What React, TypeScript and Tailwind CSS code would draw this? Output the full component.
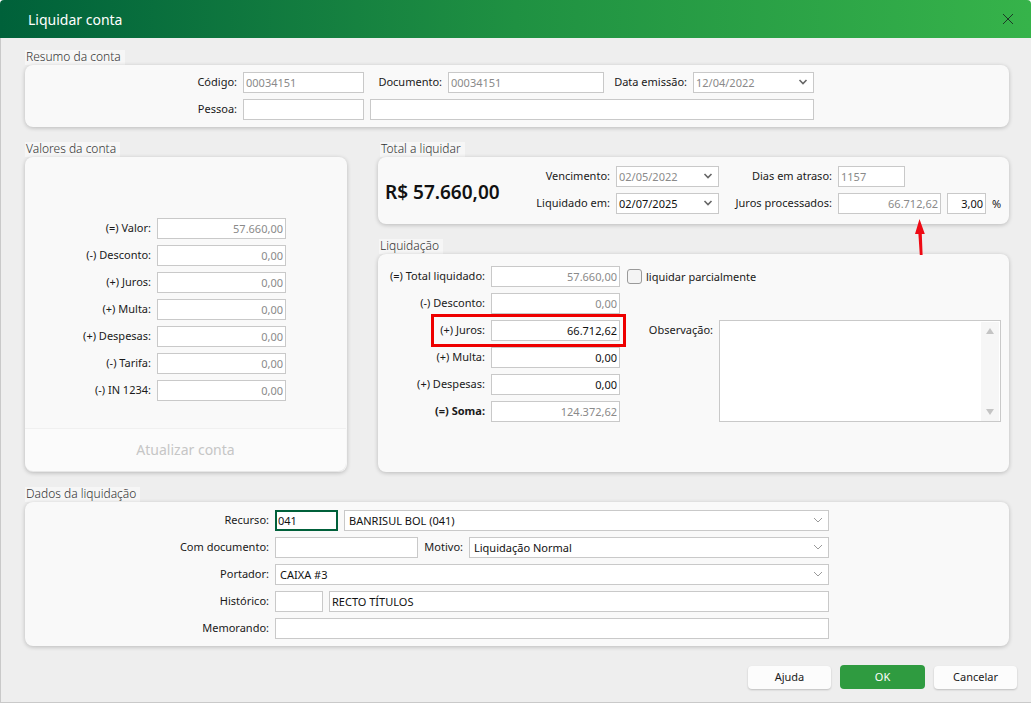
import type { ReactNode } from 'react';

const fieldBase = 'h-[21px] shrink-0 border border-[#c9c9c9] bg-white flex items-center pb-[1px] text-[11px] leading-none whitespace-nowrap';

function Chevron({ light }: { light?: boolean }) {
  return light ? (
    <svg width="10" height="6" viewBox="0 0 10 6" className="shrink-0">
      <path d="M1 1l4 4 4-4" fill="none" stroke="#9a9a9a" strokeWidth="1" />
    </svg>
  ) : (
    <svg width="10" height="6" viewBox="0 0 10 6" className="shrink-0">
      <path d="M1.5 1l3.5 3.5L8.5 1" fill="none" stroke="#666666" strokeWidth="1.6" />
    </svg>
  );
}

function Field({
  w,
  value,
  muted,
  right,
}: {
  w: string;
  value?: string;
  muted?: boolean;
  right?: boolean;
}) {
  return (
    <div
      className={`${fieldBase} ${w} px-[2px] ${right ? 'justify-end' : ''} ${
        muted ? 'text-[#8a8a8a]' : 'text-[#111111]'
      }`}
    >
      {value}
    </div>
  );
}

function Select({
  w,
  value,
  muted,
  large,
}: {
  w: string;
  value?: string;
  muted?: boolean;
  large?: boolean;
}) {
  return (
    <div
      className={`${fieldBase} ${w} justify-between ${large ? 'pl-[4px] pr-[5px]' : 'pl-[2px] pr-[5px]'} ${
        muted ? 'text-[#8a8a8a]' : 'text-[#111111]'
      }`}
    >
      <span>{value}</span>
      <Chevron light={large} />
    </div>
  );
}

function Label({ w, children, bold }: { w: string; children: ReactNode; bold?: boolean }) {
  return (
    <span className={`${w} shrink-0 whitespace-nowrap pb-[2px] text-right text-[11px] leading-none text-[#1a1a1a] ${bold ? 'font-bold' : ''}`}>
      {children}
    </span>
  );
}

function Section({
  title,
  titleClass = '',
  className = '',
  cardClass = '',
  children,
}: {
  title: string;
  titleClass?: string;
  className?: string;
  cardClass?: string;
  children: ReactNode;
}) {
  return (
    <section className={className}>
      <div className={`h-[15px] w-fit bg-[#f6f6f6] pl-[1px] pr-[4px] text-[12px] font-light leading-[14px] text-[#333333] ${titleClass}`}>
        {title}
      </div>
      <div className={`relative rounded-[8px] bg-[#f9f9f9] shadow-[0_1px_4px_rgba(0,0,0,0.22)] ${cardClass}`}>{children}</div>
    </section>
  );
}

function Row({ children }: { children: ReactNode }) {
  return <div className="flex items-center gap-[6px]">{children}</div>;
}

const contaValues: [string, string][] = [
  ['(=) Valor:', '57.660,00'],
  ['(-) Desconto:', '0,00'],
  ['(+) Juros:', '0,00'],
  ['(+) Multa:', '0,00'],
  ['(+) Despesas:', '0,00'],
  ['(-) Tarifa:', '0,00'],
  ['(-) IN 1234:', '0,00'],
];

export default function App() {
  return (
    <div className="flex h-[703px] w-[1031px] flex-col overflow-hidden bg-white font-['Noto_Sans',sans-serif]">
      <header className="flex h-[38px] shrink-0 items-center justify-between rounded-t-[4px] bg-gradient-to-r from-[#00613a] via-[#1f9142] to-[#36b34a] pl-[28px] pr-[18px]">
        <h1 className="pt-[1px] text-[14px] font-normal leading-none text-white">Liquidar conta</h1>
        <svg width="10" height="10" viewBox="0 0 10 10">
          <path d="M0 0l10 10M10 0L0 10" stroke="#1c3a26" strokeWidth="1" />
        </svg>
      </header>

      <main className="flex flex-1 flex-col border-b border-l border-[#c9c9c9] bg-[#eeeeee] pl-[24px] pr-[22px] pt-[12px]">
        <Section title="Resumo da conta" cardClass="h-[62px] flex flex-col gap-[6px] pt-[7px] pl-[165px]">
          <Row>
            <Label w="w-[47px]">Código:</Label>
            <Field w="w-[121px]" value="00034151" muted />
            <Label w="w-[72px]">Documento:</Label>
            <Field w="w-[156px]" value="00034151" muted />
            <Label w="w-[77px]">Data emissão:</Label>
            <Select w="w-[121px]" value="12/04/2022" muted />
          </Row>
          <Row>
            <Label w="w-[47px]">Pessoa:</Label>
            <Field w="w-[121px]" />
            <Field w="w-[444px]" />
          </Row>
        </Section>

        <div className="mt-[15px] flex gap-[31px]">
          <Section title="Valores da conta" className="w-[322px]" cardClass="h-[315px] flex flex-col">
            <div className="flex flex-1 flex-col gap-[6px] pl-[6px] pt-[61px]">
              {contaValues.map(([label, value]) => (
                <Row key={label}>
                  <Label w="w-[120px]">{label}</Label>
                  <Field w="w-[129px]" value={value} muted right />
                </Row>
              ))}
            </div>
            <button className="mb-[1px] mr-[1px] flex h-[43px] items-center justify-center rounded-b-[8px] border-t border-[#f0f0f0] bg-[#fbfbfb] pb-[2px] text-[14px] text-[#c6c6c6] shadow-[0_1px_1px_rgba(0,0,0,0.08)]">
              Atualizar conta
            </button>
          </Section>

          <div className="relative w-[631px]">
            <Section title="Total a liquidar" titleClass="ml-[2px]" cardClass="h-[67px] flex pt-[9px]">
              <div className="mt-[17px] w-[136px] shrink-0 pl-[7px] text-[19px] font-semibold leading-none text-[#111111]">
                R$ 57.660,00
              </div>
              <div className="flex flex-col gap-[6px]">
                <Row>
                  <Label w="w-[96px]">Vencimento:</Label>
                  <Select w="w-[103px]" value="02/05/2022" muted />
                  <Label w="w-[107px]">Dias em atraso:</Label>
                  <Field w="w-[67px]" value="1157" muted />
                </Row>
                <Row>
                  <Label w="w-[96px]">Liquidado em:</Label>
                  <Select w="w-[103px]" value="02/07/2025" />
                  <Label w="w-[107px]">Juros processados:</Label>
                  <Field w="w-[103px]" value="66.712,62" muted right />
                  <Field w="w-[39px]" value="3,00" right />
                  <span className="pb-[1px] text-[11px] leading-none text-[#1a1a1a]">%</span>
                </Row>
              </div>
            </Section>

            <Section title="Liquidação" className="mt-[15px]" titleClass="ml-[1px]" cardClass="h-[218px] flex pl-[7px] pt-[12px]">
              <div className="flex flex-col gap-[6px]">
                <Row>
                  <Label w="w-[100px]">(=) Total liquidado:</Label>
                  <Field w="w-[129px]" value="57.660,00" muted right />
                </Row>
                <Row>
                  <Label w="w-[100px]">(-) Desconto:</Label>
                  <Field w="w-[129px]" value="0,00" muted right />
                </Row>
                <Row>
                  <Label w="w-[100px]">(+) Juros:</Label>
                  <Field w="w-[129px]" value="66.712,62" right />
                </Row>
                <Row>
                  <Label w="w-[100px]">(+) Multa:</Label>
                  <Field w="w-[129px]" value="0,00" right />
                </Row>
                <Row>
                  <Label w="w-[100px]">(+) Despesas:</Label>
                  <Field w="w-[129px]" value="0,00" right />
                </Row>
                <Row>
                  <Label w="w-[100px]" bold>(=) Soma:</Label>
                  <Field w="w-[129px]" value="124.372,62" muted right />
                </Row>
              </div>
              <div className="ml-[7px] flex flex-col">
                <div className="flex h-[21px] items-center gap-[4px]">
                  <span className="h-[15px] w-[15px] rounded-[3px] border border-[#9a9a9a] bg-[#f4f4f4]" />
                  <span className="text-[11px] leading-none text-[#1a1a1a]">liquidar parcialmente</span>
                </div>
                <div className="ml-[15px] mt-[33px] flex gap-[6px]">
                  <span className="w-[71px] pt-[4px] text-right text-[11px] leading-none text-[#1a1a1a]">Observação:</span>
                  <div className="flex h-[102px] w-[282px] justify-end border border-[#c9c9c9] bg-white pr-[1px] pt-[1px]">
                    <div className="flex h-[99px] w-[18px] flex-col items-center justify-between bg-[#f6f6f6] py-[6px]">
                      <svg width="8" height="6" viewBox="0 0 8 6">
                        <path d="M4 0l4 6H0z" fill="#c4c4c4" />
                      </svg>
                      <svg width="8" height="6" viewBox="0 0 8 6">
                        <path d="M0 0h8L4 6z" fill="#c4c4c4" />
                      </svg>
                    </div>
                  </div>
                </div>
              </div>
              <div className="absolute left-[53px] top-[60px] h-[33px] w-[195px] border-[3px] border-[#ee0000]" />
            </Section>

            <svg width="12" height="36" viewBox="0 0 12 36" className="absolute left-[537px] top-[77px]">
              <path d="M4.5 0L0 15H3.4L4.8 36H7.6L6.8 15H9.8z" fill="#ee0a14" />
            </svg>
          </div>
        </div>

        <Section title="Dados da liquidação" className="mt-[15px]" cardClass="h-[144px] flex flex-col gap-[6px] pt-[8px] pl-[6px]">
          <Row>
            <Label w="w-[238px]">Recurso:</Label>
            <div className="flex h-[21px] w-[63px] shrink-0 items-center border-2 border-[#00603a] bg-white pb-[1px] pl-[1px] text-[11px] leading-none text-[#111111]">
              041
            </div>
            <Select w="w-[485px]" value="BANRISUL BOL (041)" large />
          </Row>
          <Row>
            <Label w="w-[238px]">Com documento:</Label>
            <Field w="w-[143px]" />
            <Label w="w-[39px]">Motivo:</Label>
            <Select w="w-[360px]" value="Liquidação Normal" large />
          </Row>
          <Row>
            <Label w="w-[238px]">Portador:</Label>
            <Select w="w-[554px]" value="CAIXA #3" large />
          </Row>
          <Row>
            <Label w="w-[238px]">Histórico:</Label>
            <Field w="w-[48px]" />
            <Field w="w-[500px]" value="RECTO TÍTULOS" />
          </Row>
          <Row>
            <Label w="w-[238px]">Memorando:</Label>
            <Field w="w-[554px]" />
          </Row>
        </Section>

        <footer className="-mr-[8px] mt-[19px] flex items-center justify-end">
          <button className="h-[23px] w-[83px] rounded-[4px] bg-[#fcfcfc] text-[11px] text-[#1a1a1a] shadow-[0_1px_2px_rgba(0,0,0,0.2)]">
            Ajuda
          </button>
          <button className="ml-[9px] h-[24px] w-[85px] rounded-[4px] bg-[#2f9b40] text-[11px] text-white">OK</button>
          <button className="ml-[9px] h-[23px] w-[83px] rounded-[4px] bg-[#fcfcfc] text-[11px] text-[#1a1a1a] shadow-[0_1px_2px_rgba(0,0,0,0.2)]">
            Cancelar
          </button>
        </footer>
      </main>
    </div>
  );
}
